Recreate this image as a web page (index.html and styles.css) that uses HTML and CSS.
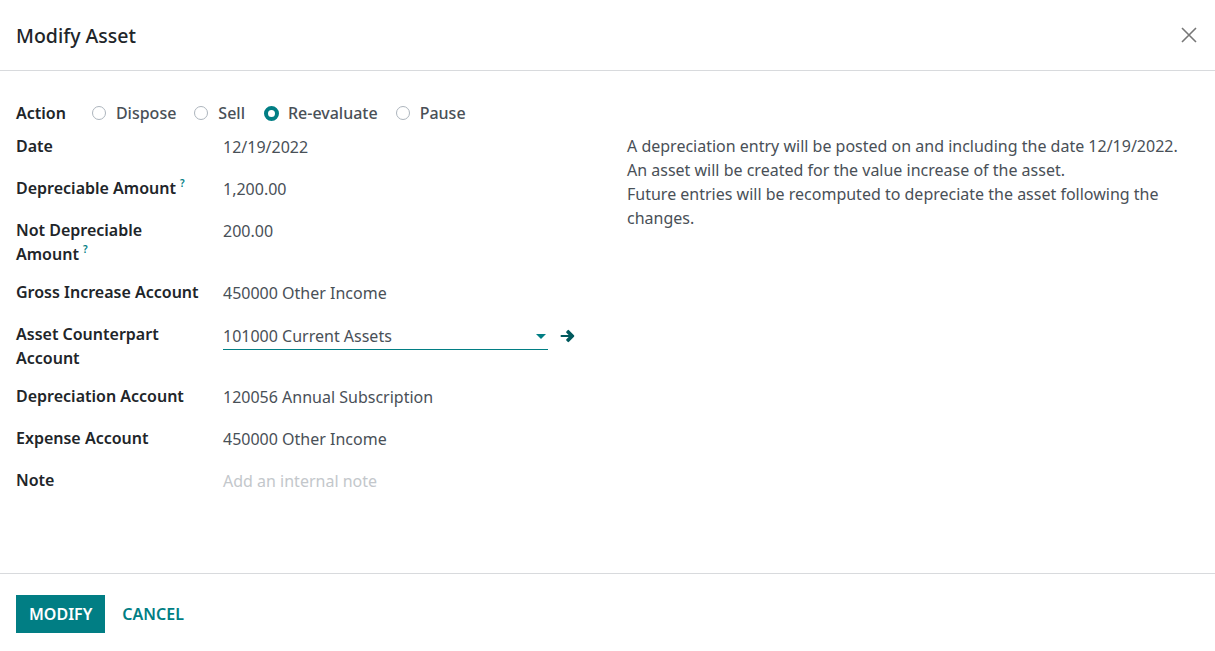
FILE: index.html
```html
<!DOCTYPE html>
<html>
<head>
    <title>Modify Asset</title>
    <link rel="stylesheet" href="styles.css">
</head>
<body>
    <div class="modal">
        <div class="modal-header">
            <h4 class="modal-title">Modify Asset</h4>
            <button class="btn-close" aria-label="Close">
                <svg width="16" height="16" viewBox="0 0 16 16"><path d="M1 1L15 15M15 1L1 15" stroke="#777" stroke-width="1.6" fill="none"/></svg>
            </button>
        </div>

        <div class="modal-body">
            <div class="action-row">
                <span class="label">Action</span>
                <label class="radio"><span class="dot"></span>Dispose</label>
                <label class="radio"><span class="dot"></span>Sell</label>
                <label class="radio"><span class="dot checked"></span>Re-evaluate</label>
                <label class="radio"><span class="dot"></span>Pause</label>
            </div>

            <div class="columns">
                <div class="group">
                    <div class="row">
                        <div class="label">Date</div>
                        <div class="value">12/19/2022</div>
                    </div>
                    <div class="row">
                        <div class="label">Depreciable Amount<sup class="help">?</sup></div>
                        <div class="value">1,200.00</div>
                    </div>
                    <div class="row">
                        <div class="label">Not Depreciable Amount<sup class="help">?</sup></div>
                        <div class="value">200.00</div>
                    </div>
                    <div class="row">
                        <div class="label nowrap">Gross Increase Account</div>
                        <div class="value">450000 Other Income</div>
                    </div>
                    <div class="row">
                        <div class="label">Asset Counterpart Account</div>
                        <div class="value many2one">
                            <div class="select">
                                <span>101000 Current Assets</span>
                                <span class="caret"></span>
                            </div>
                            <svg class="arrow" width="15" height="14" viewBox="0 0 15 14"><path d="M7.6 1.2L6.4 2.4a1 1 0 0 0 0 1.4L8.6 6H1.5a1 1 0 0 0-1 1v0a1 1 0 0 0 1 1h7.1L6.4 10.2a1 1 0 0 0 0 1.4l1.2 1.2a1 1 0 0 0 1.4 0L14 7.7a1 1 0 0 0 0-1.4L9 1.2a1 1 0 0 0-1.4 0z" fill="#01595d"/></svg>
                        </div>
                    </div>
                    <div class="row">
                        <div class="label">Depreciation Account</div>
                        <div class="value">120056 Annual Subscription</div>
                    </div>
                    <div class="row">
                        <div class="label">Expense Account</div>
                        <div class="value">450000 Other Income</div>
                    </div>
                    <div class="row">
                        <div class="label">Note</div>
                        <div class="value placeholder">Add an internal note</div>
                    </div>
                </div>

                <div class="info">
                    <p>A depreciation entry will be posted on and including the date 12/19/2022.</p>
                    <p>An asset will be created for the value increase of the asset.</p>
                    <p>Future entries will be recomputed to depreciate the asset following the changes.</p>
                </div>
            </div>
        </div>

        <div class="modal-footer">
            <button class="btn btn-primary">Modify</button>
            <button class="btn btn-link">Cancel</button>
        </div>
    </div>
</body>
</html>
```

FILE: styles.css
```css
html, body {
    height: 100%;
}

body {
    margin: 0;
    background-color: #fff;
    color: #212529;
    font-family: "Noto Sans", sans-serif;
    font-size: 16px;
}

.modal {
    height: 100%;
    display: flex;
    flex-direction: column;
}

.modal-header {
    height: 70px;
    padding: 0 16px;
    display: flex;
    align-items: center;
    justify-content: space-between;
    border-bottom: 1px solid #d8dadd;
}

.modal-title {
    margin: 0;
    font-size: 19.5px;
    font-weight: 500;
}

.btn-close {
    border: none;
    background: none;
    padding: 0;
    margin-right: 2px;
    cursor: pointer;
    display: flex;
}

.modal-body {
    flex: 1;
    padding: 30px 16px 0 16px;
}

.label {
    font-weight: 600;
    line-height: 24px;
}

.nowrap {
    white-space: nowrap;
}

.action-row {
    display: flex;
    align-items: center;
    height: 24px;
    margin-bottom: 9px;
}

.action-row .label {
    margin-right: 27px;
}

.radio {
    display: flex;
    align-items: center;
    margin-right: 19px;
    color: #495057;
    font-weight: 500;
}

.dot {
    width: 14px;
    height: 14px;
    border: 1px solid #adb5bd;
    border-radius: 50%;
    margin-right: 10px;
    margin-left: -1px;
    box-sizing: border-box;
}

.dot.checked {
    width: 15px;
    height: 15px;
    border: 4px solid #017e84;
    background-color: #fff;
    margin-left: 0;
    margin-right: 9px;
}

.columns {
    display: flex;
}

.group {
    width: 576px;
}

.row {
    display: flex;
    margin-bottom: 14px;
}

.row .label {
    width: 180px;
    padding-right: 27px;
}

.help {
    color: #017e84;
    font-size: 10px;
    line-height: 1;
    vertical-align: 7px;
    margin-left: 4px;
}

.value {
    flex: 1;
    min-height: 28px;
    box-sizing: border-box;
    padding: 1px 0 3px 0;
    line-height: 24px;
    color: #495057;
}

.placeholder {
    color: #c3c7cb;
}

.many2one {
    display: flex;
    align-items: flex-start;
    padding: 0;
}

.select {
    width: 325px;
    height: 28px;
    box-sizing: border-box;
    padding-top: 1px;
    border-bottom: 1px solid #017e84;
    display: flex;
    justify-content: space-between;
    align-items: center;
    align-self: flex-start;
}

.caret {
    width: 0;
    height: 0;
    border-left: 5px solid transparent;
    border-right: 5px solid transparent;
    border-top: 5px solid #017e84;
    margin-right: 2px;
}

.arrow {
    margin-left: 12px;
    margin-top: 7px;
}

.info {
    flex: 1;
    padding-left: 35px;
    color: #495057;
    line-height: 24px;
}

.info p {
    margin: 0;
}

.modal-footer {
    height: 78px;
    box-sizing: border-box;
    padding: 21px 16px 0 16px;
    border-top: 1px solid #d8dadd;
    display: flex;
    align-items: flex-start;
}

.btn {
    height: 38px;
    padding: 0 13px;
    border: none;
    font-family: "Noto Sans", sans-serif;
    font-size: 16px;
    font-weight: 600;
    text-transform: uppercase;
    cursor: pointer;
}

.btn-primary {
    background-color: #017e84;
    color: #fff;
}

.btn-link {
    background: none;
    color: #017e84;
    margin-left: 4px;
}
```
